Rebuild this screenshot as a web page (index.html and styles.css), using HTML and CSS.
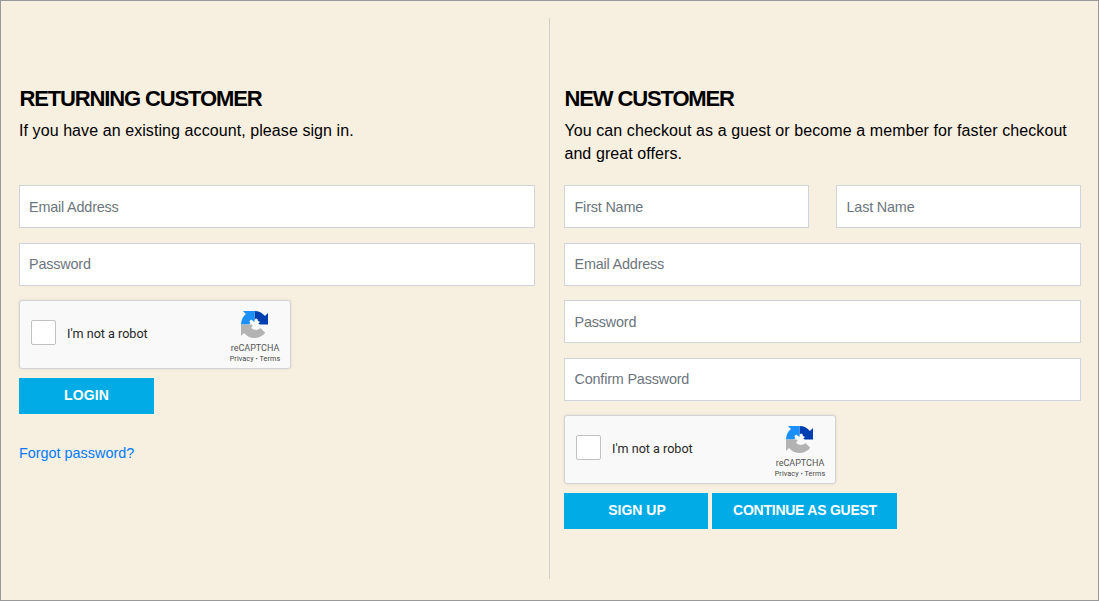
FILE: index.html
```html
<!DOCTYPE html>
<html lang="en">
<head>
<meta charset="utf-8">
<title>Checkout sign in</title>
<link rel="stylesheet" href="styles.css">
</head>
<body>
<svg class="sprite" width="0" height="0" aria-hidden="true">
  <symbol id="recaptcha" viewBox="0 0 64 64">
    <path fill="#003fb0" d="M32 0c10 0 19 4.6 24.8 11.8L64 4.7V32H45l-4-2 4-4-5-3-1-4-4-1-3 4z"/>
    <path fill="#1a90f8" d="M32 0H4.6l7.2 7.2C4.6 13 0 22 0 32h19l3-3-2-5 4-4 4 3 4 3z"/>
    <path fill="#b3b3b3" d="M0 32v27.3l7.2-7.2C13 59.4 22 64 32 64c10.4 0 19.6-5 25.4-12.6L46 40.500c-3 3.500-8 5-13 4-4-.5-8-3-9-6l4-3.500-3-3z"/>
  </symbol>
</svg>
<main class="panel">
  <section class="column returning">
    <h2>RETURNING CUSTOMER</h2>
    <p class="intro">If you have an existing account, please sign in.</p>
    <form class="fields">
      <input type="email" placeholder="Email Address">
      <input type="password" placeholder="Password">
      <div class="captcha">
        <span class="check"></span><span class="label">I'm not a robot</span>
        <div class="brand"><svg><use href="#recaptcha"/></svg><span class="name">reCAPTCHA</span><span class="legal">Privacy <b>·</b> Terms</span></div>
      </div>
    </form>
    <div class="actions"><button class="login">LOGIN</button></div>
    <a class="forgot" href="#">Forgot password?</a>
  </section>
  <section class="column new">
    <h2>NEW CUSTOMER</h2>
    <p class="intro">You can checkout as a guest or become a member for faster checkout and great offers.</p>
    <form class="fields">
      <div class="names">
        <input type="text" placeholder="First Name">
        <input type="text" placeholder="Last Name">
      </div>
      <input type="email" placeholder="Email Address">
      <input type="password" placeholder="Password">
      <input type="password" placeholder="Confirm Password">
      <div class="captcha">
        <span class="check"></span><span class="label">I'm not a robot</span>
        <div class="brand"><svg><use href="#recaptcha"/></svg><span class="name">reCAPTCHA</span><span class="legal">Privacy <b>·</b> Terms</span></div>
      </div>
    </form>
    <div class="actions"><button class="signup">SIGN UP</button><button class="guest">CONTINUE AS GUEST</button></div>
  </section>
</main>
</body>
</html>
```
FILE: styles.css
```css
* { box-sizing: border-box; }
body {
  margin: 0;
  font-family: "Liberation Sans", Arial, sans-serif;
  color: #000;
  background: #f7efe0;
}
.sprite { display: block; }
.panel {
  display: grid;
  grid-template-columns: 531px 531px;
  height: 601px;
  padding: 17px 18px 21px;
  border: 1px solid #999;
  background: #f7efe0;
}
.column { padding-top: 67px; }
.returning { padding-right: 14px; border-right: 1px solid #d2cec8; }
.new { padding-left: 14px; }
h2 {
  margin: 0;
  height: 34px;
  padding: 1px 0 0 .4px;
  font-size: 22px;
  line-height: 26px;
  letter-spacing: -1.13px;
  white-space: nowrap;
}
.new h2 { padding-left: .5px; }
.intro {
  margin: 0;
  height: 66px;
  font-size: 16px;
  line-height: 23px;
  letter-spacing: .08px;
}
.new .intro { padding-left: .4px; letter-spacing: .09px; }
.fields { display: flex; flex-direction: column; gap: 14.5px; }
.names { display: grid; grid-template-columns: 245px 245px; justify-content: space-between; }
input {
  display: block;
  width: 100%;
  height: 43px;
  padding: 0 9px;
  border: 1px solid #ced4da;
  border-radius: 0;
  background: #fff;
  font: 14.4px "Liberation Sans", Arial, sans-serif;
  letter-spacing: -.18px;
}
.new input { padding-left: 9.5px; }
input::placeholder { color: #6c757d; opacity: 1; }
.captcha {
  display: flex;
  align-items: center;
  width: 272px;
  height: 69px;
  padding: 0 5px 0 11px;
  border: 1px solid #d3d3d3;
  border-radius: 3px;
  background: #f9f9f9;
  box-shadow: 0 0 3px rgba(0, 0, 0, .1);
  font-family: Roboto, sans-serif;
}
.check {
  width: 25px;
  height: 25px;
  margin: -4px 11px 0 0;
  border: 1px solid #c1c1c1;
  border-radius: 2px;
  background: #fff;
}
.label { margin-top: -3px; color: #282828; font-size: 12.6px; }
.brand {
  display: flex;
  flex-direction: column;
  align-items: center;
  align-self: flex-start;
  width: 60px;
  margin-left: auto;
  padding-top: 10px;
  color: #555;
}
.brand svg { width: 27px; height: 27px; margin-right: 1px; }
.name { margin-top: 5px; font-size: 9px; line-height: 11px; }
.legal { color: #444; font-size: 7.2px; line-height: 10px; letter-spacing: .1px; white-space: nowrap; }
.legal b { color: #000; }
.actions { display: flex; gap: 4px; margin-top: 9px; }
button {
  height: 36px;
  padding: 0 0 2px;
  border: 0;
  background: #00abe6;
  color: #fff;
  font: bold 14px "Liberation Sans", Arial, sans-serif;
}
.login { width: 135px; letter-spacing: .15px; }
.signup { width: 144px; padding-left: 2px; }
.guest { width: 185px; letter-spacing: -.25px; padding-left: 1px; }
.forgot {
  display: block;
  margin-top: 30px;
  color: #007bff;
  font-size: 14.4px;
  line-height: 18px;
  text-decoration: none;
}
```
